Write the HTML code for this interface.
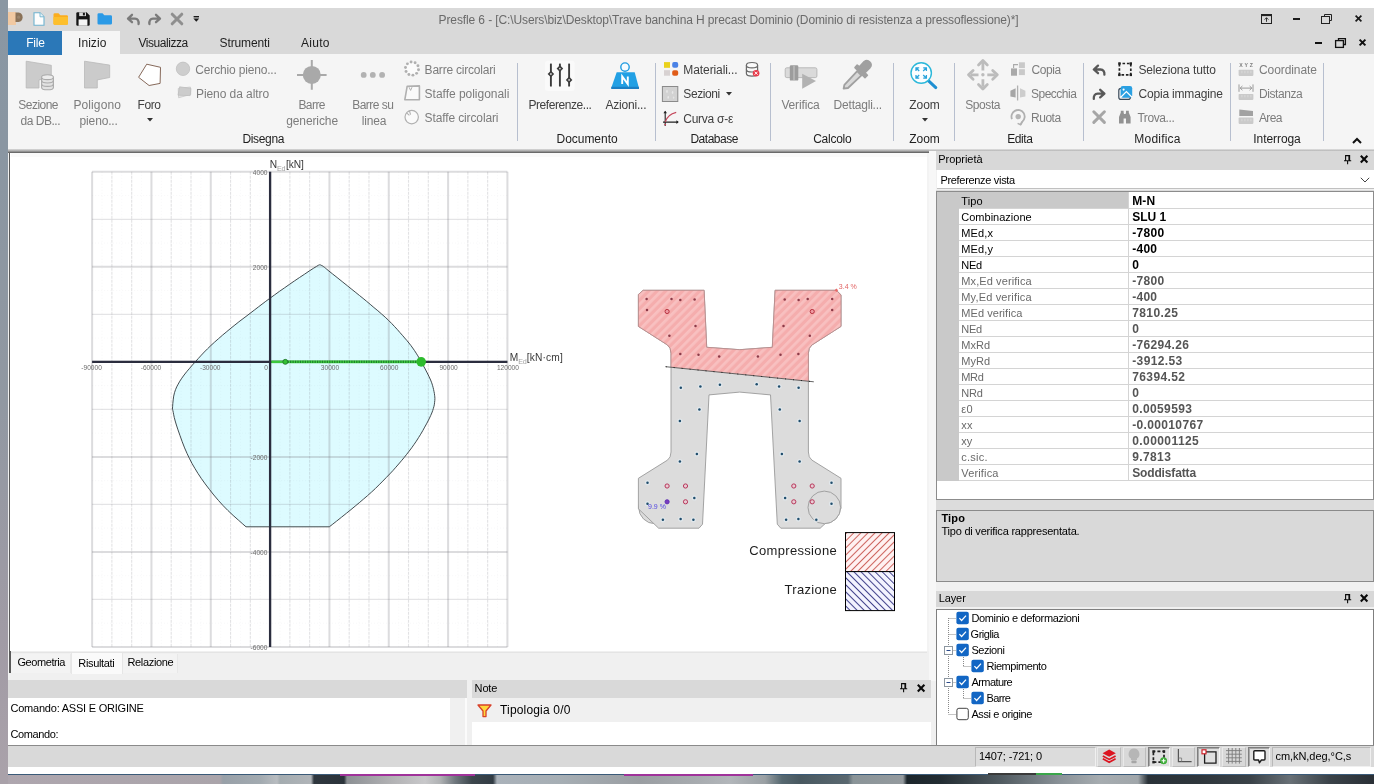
<!DOCTYPE html>
<html><head><meta charset="utf-8"><title>Presfle 6</title>
<style>
html,body{margin:0;padding:0;}
body{width:1374px;height:784px;overflow:hidden;background:#fff;position:relative;font-family:"Liberation Sans",sans-serif;}
div,span,svg{position:absolute;box-sizing:border-box;}
svg{overflow:visible;}
#root{left:0;top:0;width:1374px;height:784px;will-change:transform;}
</style></head><body><div id="root">
<div style="left:0px;top:0px;width:8px;height:784px;background:linear-gradient(#8a97a3 0px, #8a96a2 150px, #9198a2 400px, #a19ba5 640px, #aaa2aa 784px);"></div>
<div style="left:8px;top:8px;width:1366px;height:46px;background:#d9d9d9;"></div>
<div style="left:8px;top:54px;width:1366px;height:95px;background:#f5f5f5;"></div>
<div style="left:8px;top:151px;width:1366px;height:616px;background:#f0f0f0;"></div>
<div style="left:929px;top:151px;width:7px;height:530px;background:#f7f7f7;"></div>
<div style="left:8px;top:149px;width:1366px;height:2px;background:linear-gradient(#e2e2e2,#b4b4b4);"></div>
<div style="left:8px;top:149px;width:921px;height:3.6px;background:linear-gradient(#dcdcdc,#a6a6a6 50%,#565656 100%);"></div>
<div style="left:8px;top:767px;width:1366px;height:8px;background:#fff;"></div>
<div style="left:0px;top:775px;width:1374px;height:9px;background:linear-gradient(90deg,#aea6ae 0px,#aca5ac 120px,#aaa4aa 220px,#98a0a8 223px,#a2aab0 260px,#b8bcc0 277px,#a4acb0 280px,#b0b4b8 311px,#2f373e 314px,#2b333a 344px,#8c9094 347px,#b2b2b4 392px,#c8c8ca 425px,#b0b2b4 440px,#70787e 455px,#3c464c 472px,#323c44 493px,#aab2ba 497px,#a6aeb4 560px,#9a9ea2 640px,#a8acb0 700px,#b2b6ba 730px,#9aa0a4 765px,#566870 782px,#485860 800px,#5a6870 848px,#8a9498 853px,#949a9e 903px,#1c262c 907px,#222c32 940px,#505a60 1000px,#8a9298 1060px,#a6acb0 1100px,#a0a6aa 1138px,#2a3238 1148px,#2e363c 1200px,#3a4248 1250px,#687076 1290px,#3a4248 1330px,#2a3036 1374px);"></div>
<div style="left:0px;top:770px;width:8px;height:14px;background:#a9a1a9;"></div>
<div style="left:8px;top:774.2px;width:1366px;height:1.2px;background:#3a5a78;"></div>
<div style="left:340px;top:774px;width:135px;height:2px;background:#a0329a;"></div>
<div style="left:624px;top:774px;width:129px;height:2px;background:#a0329a;"></div>
<div style="left:988px;top:773.4px;width:48px;height:1.6px;background:#3a3a3a;"></div>
<div style="left:1036px;top:773.2px;width:26px;height:2px;background:#3aa64a;"></div>
<div style="left:8px;top:12px;width:8px;height:13px;background:#f1c9a2;"></div>
<svg style="left:15px;top:12px;" width="9" height="11" viewBox="0 0 9 11"><path d="M0.5 0.5 H3.5 A4.8 4.8 0 0 1 3.5 10 H0.5 Z" fill="#8a7258"/><circle cx="3.6" cy="5.2" r="1.6" fill="#9a846c"/></svg>
<svg style="left:33px;top:12px;" width="12" height="14" viewBox="0 0 12 14"><path d="M1 0.8 H7 L11 4.8 V13.2 H1 Z" fill="#fdfdfd" stroke="#6fb3cf" stroke-width="1.1"/><path d="M7 0.8 V4.8 H11" fill="#e8f4fa" stroke="#6fb3cf" stroke-width="0.9"/></svg>
<svg style="left:53px;top:13px;" width="16" height="12" viewBox="0 0 16 12"><path d="M0.5 1.6 Q0.5 0.3 1.8 0.3 H5.5 L7.3 2.2 H13.6 Q15 2.2 15 3.6 V10.4 Q15 11.7 13.6 11.7 H1.8 Q0.5 11.7 0.5 10.4 Z" fill="#fbad1e"/><path d="M0.5 4 H15 V10.4 Q15 11.7 13.6 11.7 H1.8 Q0.5 11.7 0.5 10.4 Z" fill="#fdbf2c"/></svg>
<svg style="left:76px;top:12px;" width="14" height="14" viewBox="0 0 14 14"><path d="M0.3 1.5 Q0.3 0.3 1.5 0.3 H10.6 L13.7 3.4 V12.5 Q13.7 13.7 12.5 13.7 H1.5 Q0.3 13.7 0.3 12.5 Z" fill="#141414"/><rect x="3.2" y="0.3" width="6.8" height="3.8" fill="#d9d9d9"/><rect x="6.9" y="0.8" width="2" height="2.6" fill="#141414"/><rect x="2.6" y="7.4" width="8.8" height="6.3" fill="#f4f4f4"/></svg>
<svg style="left:97px;top:13px;" width="16" height="12" viewBox="0 0 16 12"><path d="M0.5 1.6 Q0.5 0.3 1.8 0.3 H5.5 L7.3 2.2 H13.6 Q15 2.2 15 3.6 V10.2 Q15 11.5 13.6 11.5 H1.8 Q0.5 11.5 0.5 10.2 Z" fill="#2b9ae6"/></svg>
<svg style="left:127px;top:14px;" width="13" height="11" viewBox="0 0 13 11"><path d="M5 0.8 L1 4.6 L5 8.2 M1.4 4.6 H8 Q12 4.8 11.6 10" fill="none" stroke="#7a7a7a" stroke-width="2.3" stroke-linejoin="round" stroke-linecap="round"/></svg>
<svg style="left:148px;top:14px;" width="13" height="11" viewBox="0 0 13 11"><path d="M8 0.8 L12 4.6 L8 8.2 M11.6 4.6 H5 Q1 4.8 1.4 10" fill="none" stroke="#7a7a7a" stroke-width="2.3" stroke-linejoin="round" stroke-linecap="round"/></svg>
<svg style="left:171px;top:13px;" width="12" height="12" viewBox="0 0 12 12"><path d="M1.2 1.2 L10.8 10.8 M10.8 1.2 L1.2 10.8" stroke="#8f8f8f" stroke-width="3" stroke-linecap="round"/></svg>
<svg style="left:193px;top:16px;" width="7" height="6" viewBox="0 0 7 6"><rect x="0.6" y="0" width="5.4" height="1.4" fill="#1a1a1a"/><path d="M0.4 2.6 H6.2 L3.3 5.8 Z" fill="#1a1a1a"/></svg>
<span style="left:438.6px;top:11.5px;font-size:12px;line-height:16px;letter-spacing:-0.114px;color:#6a6a6a;white-space:pre;">Presfle 6 - [C:\Users\biz\Desktop\Trave banchina H precast Dominio (Dominio di resistenza a pressoflessione)*]</span>
<svg style="left:1261px;top:14px;" width="11" height="10" viewBox="0 0 11 10"><rect x="0.5" y="0.5" width="10" height="9" fill="none" stroke="#222" stroke-width="1"/><rect x="0.5" y="0.5" width="10" height="1.6" fill="#222"/><path d="M5.5 7.8 V3.8 M3.6 5.6 L5.5 3.7 L7.4 5.6" fill="none" stroke="#222" stroke-width="0.9"/></svg>
<div style="left:1293px;top:18px;width:7px;height:2px;background:#1a1a1a;"></div>
<svg style="left:1321px;top:14px;" width="11" height="10" viewBox="0 0 11 10"><path d="M3.5 2.5 V0.5 H10.5 V6.5 H8.5" fill="none" stroke="#222" stroke-width="1"/><rect x="0.5" y="2.5" width="8" height="7" fill="none" stroke="#222" stroke-width="1"/></svg>
<svg style="left:1355px;top:15px;" width="7" height="7" viewBox="0 0 7 7"><path d="M0.6 0.6 L6.4 6.4 M6.4 0.6 L0.6 6.4" stroke="#1a1a1a" stroke-width="1.7"/></svg>
<div style="left:1315px;top:42px;width:7px;height:2px;background:#111;"></div>
<svg style="left:1335px;top:38px;" width="11" height="10" viewBox="0 0 11 10"><path d="M3.5 2.5 V0.6 H10.4 V6.5 H8.5" fill="none" stroke="#111" stroke-width="1.3"/><rect x="0.6" y="2.6" width="7.8" height="6.8" fill="none" stroke="#111" stroke-width="1.3"/></svg>
<svg style="left:1359px;top:39px;" width="7" height="7" viewBox="0 0 7 7"><path d="M0.6 0.6 L6.4 6.4 M6.4 0.6 L0.6 6.4" stroke="#111" stroke-width="2"/></svg>
<div style="left:8px;top:31px;width:54px;height:24px;background:#2b78b8;"></div>
<div style="left:62px;top:31px;width:58px;height:24px;background:#f5f5f5;"></div>
<span style="left:26.3px;top:34.6px;font-size:12px;line-height:16px;letter-spacing:-0.259px;color:#ffffff;white-space:pre;">File</span>
<span style="left:78.0px;top:34.6px;font-size:12px;line-height:16px;letter-spacing:0.064px;color:#1e1e1e;white-space:pre;">Inizio</span>
<span style="left:138.5px;top:34.6px;font-size:12px;line-height:16px;letter-spacing:-0.451px;color:#1e1e1e;white-space:pre;">Visualizza</span>
<span style="left:219.6px;top:34.6px;font-size:12px;line-height:16px;letter-spacing:-0.139px;color:#1e1e1e;white-space:pre;">Strumenti</span>
<span style="left:301.0px;top:34.6px;font-size:12px;line-height:16px;letter-spacing:0.270px;color:#1e1e1e;white-space:pre;">Aiuto</span>
<div style="left:517px;top:63px;width:1px;height:78px;background:#b7bfcf;"></div>
<div style="left:655px;top:63px;width:1px;height:78px;background:#b7bfcf;"></div>
<div style="left:770px;top:63px;width:1px;height:78px;background:#b7bfcf;"></div>
<div style="left:893px;top:63px;width:1px;height:78px;background:#b7bfcf;"></div>
<div style="left:954px;top:63px;width:1px;height:78px;background:#b7bfcf;"></div>
<div style="left:1083px;top:63px;width:1px;height:78px;background:#b7bfcf;"></div>
<div style="left:1230px;top:63px;width:1px;height:78px;background:#b7bfcf;"></div>
<div style="left:1323px;top:63px;width:1px;height:78px;background:#b7bfcf;"></div>
<span style="left:242.4px;top:130.8px;font-size:12px;line-height:16px;letter-spacing:-0.318px;color:#1e1e1e;white-space:pre;">Disegna</span>
<span style="left:556.5px;top:130.8px;font-size:12px;line-height:16px;letter-spacing:-0.029px;color:#1e1e1e;white-space:pre;">Documento</span>
<span style="left:690.4px;top:130.8px;font-size:12px;line-height:16px;letter-spacing:-0.471px;color:#1e1e1e;white-space:pre;">Database</span>
<span style="left:813.2px;top:130.8px;font-size:12px;line-height:16px;letter-spacing:-0.260px;color:#1e1e1e;white-space:pre;">Calcolo</span>
<span style="left:909.2px;top:130.8px;font-size:12px;line-height:16px;letter-spacing:-0.018px;color:#1e1e1e;white-space:pre;">Zoom</span>
<span style="left:1007.3px;top:130.8px;font-size:12px;line-height:16px;letter-spacing:-0.430px;color:#1e1e1e;white-space:pre;">Edita</span>
<span style="left:1134.3px;top:130.8px;font-size:12px;line-height:16px;letter-spacing:0.215px;color:#1e1e1e;white-space:pre;">Modifica</span>
<span style="left:1253.3px;top:130.8px;font-size:12px;line-height:16px;letter-spacing:-0.070px;color:#1e1e1e;white-space:pre;">Interroga</span>
<svg style="left:1352px;top:137px;" width="10" height="7" viewBox="0 0 10 7"><path d="M1 6 L5 2 L9 6" fill="none" stroke="#111" stroke-width="2"/></svg>
<span style="left:18.3px;top:96.7px;font-size:12px;line-height:16px;letter-spacing:-0.524px;color:#7c7c7c;white-space:pre;">Sezione</span>
<span style="left:20.5px;top:112.7px;font-size:12px;line-height:16px;letter-spacing:-0.482px;color:#7c7c7c;white-space:pre;">da DB...</span>
<span style="left:73.4px;top:96.7px;font-size:12px;line-height:16px;letter-spacing:0.112px;color:#7c7c7c;white-space:pre;">Poligono</span>
<span style="left:79.6px;top:112.7px;font-size:12px;line-height:16px;letter-spacing:-0.158px;color:#7c7c7c;white-space:pre;">pieno...</span>
<span style="left:137.5px;top:96.7px;font-size:12px;line-height:16px;letter-spacing:-0.418px;color:#404040;white-space:pre;">Foro</span>
<svg style="left:146.5px;top:118px;" width="6" height="4" viewBox="0 0 6 4"><path d="M0 0 H6 L3 3.4 Z" fill="#333"/></svg>
<span style="left:195.3px;top:61.8px;font-size:12px;line-height:16px;letter-spacing:-0.165px;color:#7c7c7c;white-space:pre;">Cerchio pieno...</span>
<span style="left:196.0px;top:85.8px;font-size:12px;line-height:16px;letter-spacing:-0.075px;color:#7c7c7c;white-space:pre;">Pieno da altro</span>
<span style="left:298.4px;top:96.7px;font-size:12px;line-height:16px;letter-spacing:-0.549px;color:#7c7c7c;white-space:pre;">Barre</span>
<span style="left:286.2px;top:112.7px;font-size:12px;line-height:16px;letter-spacing:-0.101px;color:#7c7c7c;white-space:pre;">generiche</span>
<span style="left:352.2px;top:96.7px;font-size:12px;line-height:16px;letter-spacing:-0.506px;color:#7c7c7c;white-space:pre;">Barre su</span>
<span style="left:361.7px;top:112.7px;font-size:12px;line-height:16px;letter-spacing:-0.131px;color:#7c7c7c;white-space:pre;">linea</span>
<span style="left:424.6px;top:61.8px;font-size:12px;line-height:16px;letter-spacing:-0.214px;color:#7c7c7c;white-space:pre;">Barre circolari</span>
<span style="left:424.6px;top:85.8px;font-size:12px;line-height:16px;letter-spacing:-0.022px;color:#7c7c7c;white-space:pre;">Staffe poligonali</span>
<span style="left:424.6px;top:109.6px;font-size:12px;line-height:16px;letter-spacing:-0.126px;color:#7c7c7c;white-space:pre;">Staffe circolari</span>
<span style="left:528.5px;top:96.7px;font-size:12px;line-height:16px;letter-spacing:-0.446px;color:#404040;white-space:pre;">Preferenze...</span>
<span style="left:605.4px;top:96.7px;font-size:12px;line-height:16px;letter-spacing:-0.187px;color:#404040;white-space:pre;">Azioni...</span>
<span style="left:683.3px;top:61.8px;font-size:12px;line-height:16px;letter-spacing:-0.087px;color:#404040;white-space:pre;">Materiali...</span>
<span style="left:683.3px;top:86.4px;font-size:12px;line-height:16px;letter-spacing:-0.422px;color:#404040;white-space:pre;">Sezioni</span>
<svg style="left:725.5px;top:92px;" width="6" height="4" viewBox="0 0 6 4"><path d="M0 0 H6 L3 3.4 Z" fill="#333"/></svg>
<span style="left:683.3px;top:110.6px;font-size:12px;line-height:16px;letter-spacing:-0.266px;color:#404040;white-space:pre;">Curva σ-ε</span>
<span style="left:781.4px;top:96.7px;font-size:12px;line-height:16px;letter-spacing:-0.144px;color:#7c7c7c;white-space:pre;">Verifica</span>
<span style="left:833.6px;top:96.7px;font-size:12px;line-height:16px;letter-spacing:-0.208px;color:#7c7c7c;white-space:pre;">Dettagli...</span>
<span style="left:909.2px;top:96.7px;font-size:12px;line-height:16px;letter-spacing:-0.018px;color:#404040;white-space:pre;">Zoom</span>
<svg style="left:921.5px;top:118px;" width="6" height="4" viewBox="0 0 6 4"><path d="M0 0 H6 L3 3.4 Z" fill="#333"/></svg>
<span style="left:965.3px;top:97.0px;font-size:12px;line-height:16px;letter-spacing:-0.443px;color:#7c7c7c;white-space:pre;">Sposta</span>
<span style="left:1031.6px;top:61.8px;font-size:12px;line-height:16px;letter-spacing:-0.451px;color:#7c7c7c;white-space:pre;">Copia</span>
<span style="left:1031.0px;top:85.8px;font-size:12px;line-height:16px;letter-spacing:-0.496px;color:#7c7c7c;white-space:pre;">Specchia</span>
<span style="left:1031.0px;top:109.6px;font-size:12px;line-height:16px;letter-spacing:-0.464px;color:#7c7c7c;white-space:pre;">Ruota</span>
<span style="left:1138.4px;top:61.8px;font-size:12px;line-height:16px;letter-spacing:-0.139px;color:#404040;white-space:pre;">Seleziona tutto</span>
<span style="left:1138.4px;top:85.8px;font-size:12px;line-height:16px;letter-spacing:-0.172px;color:#404040;white-space:pre;">Copia immagine</span>
<span style="left:1137.4px;top:109.6px;font-size:12px;line-height:16px;letter-spacing:-0.404px;color:#7c7c7c;white-space:pre;">Trova...</span>
<span style="left:1259.0px;top:61.8px;font-size:12px;line-height:16px;letter-spacing:-0.091px;color:#7c7c7c;white-space:pre;">Coordinate</span>
<span style="left:1259.0px;top:85.8px;font-size:12px;line-height:16px;letter-spacing:-0.423px;color:#7c7c7c;white-space:pre;">Distanza</span>
<span style="left:1259.0px;top:109.6px;font-size:12px;line-height:16px;letter-spacing:-0.637px;color:#7c7c7c;white-space:pre;">Area</span>
<svg style="left:0px;top:0px;" width="1374" height="784" viewBox="0 0 1374 784"><path d="M26.2 61.2 L51.3 65.3 L51.3 77.5 L39 79.9 L39 88 L26.2 88 Z" fill="#cbcbcb" stroke="#b9b9b9" stroke-width="0.8"/><path d="M41.6 77.2 V87.4 A5.9 2.4 0 0 0 53.4 87.4 V77.2 Z" fill="#e2e2e2" stroke="#aaaaaa" stroke-width="1.1"/><ellipse cx="47.5" cy="77.2" rx="5.9" ry="2.4" fill="#ececec" stroke="#aaaaaa" stroke-width="1.1"/><path d="M41.6 80.6 A5.9 2.4 0 0 0 53.4 80.6 M41.6 84 A5.9 2.4 0 0 0 53.4 84" fill="none" stroke="#aaaaaa" stroke-width="1.1"/><path d="M84.5 61.2 L109.7 65.1 L109.7 77.5 L97.3 79.9 L97.3 88 L84.5 88 Z" fill="#cbcbcb" stroke="#b9b9b9" stroke-width="0.8"/><path d="M146.7 64.2 L160.5 67.3 L160.1 83.4 L149.1 85.5 L138.6 77.3 Z" fill="#ffffff" stroke="#86695a" stroke-width="1"/><circle cx="183" cy="68.8" r="6.7" fill="#cecece" stroke="#bfbfbf" stroke-width="0.8"/><path d="M178.2 88.6 L190.4 87 L190.8 94.4 L178.6 97.8 Z" fill="#e2e2e2" stroke="#c6c6c6" stroke-width="0.7"/><path d="M179.6 86.8 L191 88.4 L190.2 95.6 L178 95.2 Z" fill="#cccccc" stroke="#bcbcbc" stroke-width="0.7"/><path d="M297 74.9 H326.6 M311.8 60.1 V89.7" stroke="#a9a9a9" stroke-width="2"/><circle cx="311.8" cy="74.9" r="9" fill="#a9a9a9"/><circle cx="363.7" cy="74.9" r="2.9" fill="#b2b2b2"/><circle cx="372.8" cy="74.9" r="2.9" fill="#b2b2b2"/><circle cx="382.1" cy="74.9" r="2.9" fill="#b2b2b2"/><circle cx="412" cy="68.6" r="6.4" fill="#fbfbfb"/><circle cx="418.50" cy="69.75" r="1.45" fill="#b0b0b0"/><circle cx="416.58" cy="73.35" r="1.45" fill="#b0b0b0"/><circle cx="412.92" cy="75.14" r="1.45" fill="#b0b0b0"/><circle cx="408.90" cy="74.43" r="1.45" fill="#b0b0b0"/><circle cx="406.07" cy="71.49" r="1.45" fill="#b0b0b0"/><circle cx="405.50" cy="67.45" r="1.45" fill="#b0b0b0"/><circle cx="407.42" cy="63.85" r="1.45" fill="#b0b0b0"/><circle cx="411.08" cy="62.06" r="1.45" fill="#b0b0b0"/><circle cx="415.10" cy="62.77" r="1.45" fill="#b0b0b0"/><circle cx="417.93" cy="65.71" r="1.45" fill="#b0b0b0"/><path d="M407.2 86.2 L419.4 85.9 L419.4 99.8 L404.8 99.8 Z" fill="#fafafa" stroke="#b0b0b0" stroke-width="1.6" stroke-linejoin="round"/><path d="M409 87.2 L410.6 90.4 L412 87.2" fill="none" stroke="#b0b0b0" stroke-width="1"/><circle cx="411.7" cy="117.1" r="6.7" fill="#fafafa" stroke="#b0b0b0" stroke-width="1.2"/><path d="M406.6 112.8 L409.4 115.4 M409.4 110.8 L410.6 114.6" fill="none" stroke="#b0b0b0" stroke-width="1.1"/><rect x="545" y="60.7" width="29.7" height="30.3" rx="3" fill="#fafafa"/><line x1="550.9" y1="63.6" x2="550.9" y2="86.5" stroke="#3c3c3c" stroke-width="1.9"/><path d="M547.6 74 L550.9 70.7 L554.1999999999999 74 L550.9 77.3 Z" fill="#3c3c3c"/><circle cx="550.9" cy="74" r="0.9" fill="#d8d8d8"/><line x1="559.9" y1="63.6" x2="559.9" y2="86.5" stroke="#3c3c3c" stroke-width="1.9"/><path d="M556.6 68.6 L559.9 65.3 L563.1999999999999 68.6 L559.9 71.89999999999999 Z" fill="#3c3c3c"/><circle cx="559.9" cy="68.6" r="0.9" fill="#d8d8d8"/><line x1="569.1" y1="63.6" x2="569.1" y2="86.5" stroke="#3c3c3c" stroke-width="1.9"/><path d="M565.8000000000001 79.9 L569.1 76.60000000000001 L572.4 79.9 L569.1 83.2 Z" fill="#3c3c3c"/><circle cx="569.1" cy="79.9" r="0.9" fill="#d8d8d8"/><circle cx="625" cy="67.1" r="4.2" fill="#f4fbff" stroke="#1e9be0" stroke-width="1.4"/><path d="M616.7 72.3 L634.7 72.3 L638.8 87.4 L611.4 87.4 Z" fill="#22a0e4"/><rect x="611.2" y="86.8" width="27.8" height="2.2" fill="#1b7fc4"/><path d="M622.2 84 V76.4 L627.8 84 V76.4" fill="none" stroke="#ffffff" stroke-width="1.9" stroke-linejoin="miter"/><rect x="664" y="62.1" width="6" height="5.7" fill="#ead21c"/><rect x="672.2" y="62.1" width="6" height="5.7" rx="1.8" fill="#4a82e6"/><rect x="664" y="70.2" width="6" height="5.5" fill="#d8d2d2"/><rect x="672.2" y="70.2" width="6" height="5.5" rx="1.8" fill="#e05c18"/><path d="M746.4 65.2 V73.6 A5.6 2.6 0 0 0 757.6 73.6 V65.2" fill="#f8f8f8" stroke="#6a6a6a" stroke-width="1.2"/><ellipse cx="752" cy="65.2" rx="5.6" ry="2.7" fill="#fbfbfb" stroke="#6a6a6a" stroke-width="1.2"/><path d="M746.4 69.4 A5.6 2.6 0 0 0 757.6 69.4" fill="none" stroke="#6a6a6a" stroke-width="1.2"/><circle cx="756.1" cy="73.2" r="3.3" fill="#e83a4a"/><path d="M754.6 71.7 L757.6 74.7 M757.6 71.7 L754.6 74.7" stroke="#fff" stroke-width="1"/><rect x="662.4" y="86.5" width="15.4" height="15" fill="#d2d2d2" stroke="#8a8a8a" stroke-width="1"/><ellipse cx="667" cy="91.5" rx="0.8" ry="1.4" fill="#e8e8e8"/><ellipse cx="672.6" cy="92.5" rx="0.8" ry="1.4" fill="#e8e8e8"/><ellipse cx="668.2" cy="97.4" rx="0.8" ry="1.4" fill="#e8e8e8"/><ellipse cx="673.6" cy="97.6" rx="0.7" ry="1.2" fill="#e4e4e4"/><path d="M665.2 111.4 V125.9 M663 122.1 H678" stroke="#222" stroke-width="1.1" fill="none"/><path d="M663.4 113.2 L665.2 110.8 L667 113.2 Z M676.4 120.3 L678.8 122.1 L676.4 123.9 Z" fill="#222"/><path d="M665.2 122.1 Q667.6 114.4 676.2 112.4" fill="none" stroke="#c4465a" stroke-width="1.2"/><circle cx="665.2" cy="124.6" r="0.9" fill="#c4465a"/><rect x="785.2" y="67.8" width="31.7" height="9.8" rx="1.6" fill="#dadada" stroke="#b4b4b4" stroke-width="0.9"/><rect x="789.8" y="65.2" width="8.5" height="15.4" rx="1.2" fill="#9c9c9c"/><rect x="793.2" y="65.8" width="1.6" height="14.2" fill="#b8b8b8"/><path d="M802.2 73.7 L816 80.9 L802.2 88.8 Z" fill="#b2b2b2"/><path d="M843.6 88.6 L844.4 84.8 L857.2 71.2 L861.4 75.4 L848 88 Z" fill="#d8d8d8" stroke="#a0a0a0" stroke-width="1.8" stroke-linejoin="round"/><path d="M855 67.6 L865 77.6 L867.4 75.2 L865 72.8 L870 67.6 A4.2 4.2 0 0 0 864.2 61.6 L859.4 66.8 L857.2 65 Z" fill="#a0a0a0" stroke="#a0a0a0" stroke-width="1.6" stroke-linejoin="round"/><line x1="928.6" y1="80.9" x2="935.8" y2="87.6" stroke="#1e8fd2" stroke-width="3" stroke-linecap="round"/><circle cx="921.2" cy="73" r="10.2" fill="#fcfeff" stroke="#2cb8da" stroke-width="1.4"/><path d="M919.2 71 L916.0 67.8 M919.2 67.8 L916.0 67.8 L916.0 71.0" fill="none" stroke="#2aa4dc" stroke-width="1.3"/><path d="M923.2 71 L926.4000000000001 67.8 M923.2 67.8 L926.4000000000001 67.8 L926.4000000000001 71.0" fill="none" stroke="#2aa4dc" stroke-width="1.3"/><path d="M919.2 75 L916.0 78.2 M919.2 78.2 L916.0 78.2 L916.0 75.0" fill="none" stroke="#2aa4dc" stroke-width="1.3"/><path d="M923.2 75 L926.4000000000001 78.2 M923.2 78.2 L926.4000000000001 78.2 L926.4000000000001 75.0" fill="none" stroke="#2aa4dc" stroke-width="1.3"/><path d="M982.9 70.39999999999999 V62.8 M982.9 79.2 V86.8 M978.5 74.8 H970.9 M987.3 74.8 H994.9" stroke="#bcbcbc" stroke-width="2.8" fill="none"/><path d="M978.5 65.0 L982.9 60.599999999999994 L987.3 65.0 M978.5 84.6 L982.9 89.0 L987.3 84.6 M973.1 70.39999999999999 L968.5 74.8 L973.1 79.2 M992.6999999999999 70.39999999999999 L997.3 74.8 L992.6999999999999 79.2" stroke="#bcbcbc" stroke-width="2.8" fill="none" stroke-linecap="round" stroke-linejoin="round"/><circle cx="982.9" cy="74.8" r="1.7" fill="#bcbcbc"/><rect x="1011" y="68.4" width="6" height="7.3" fill="#a9a9a9"/><rect x="1018.9" y="62.3" width="6" height="5.8" fill="#c9c9c9"/><rect x="1018.9" y="69.2" width="6" height="5.9" fill="#c9c9c9"/><path d="M1013.6 68 V64.6 H1018" fill="none" stroke="#a9a9a9" stroke-width="1.1"/><line x1="1017.6" y1="85.5" x2="1017.6" y2="100.5" stroke="#b0b0b0" stroke-width="1.3"/><path d="M1010.4 90.7 L1015.6 88.2 V97.4 L1010.4 96.6 Z" fill="#a6a6a6"/><path d="M1025.4 90.7 L1020 88.2 V97.4 L1025.4 96.6 Z" fill="#cdcdcd"/><circle cx="1018.2" cy="116.6" r="2.7" fill="#b4b4b4"/><path d="M1012 119.2 A6.6 6.6 0 1 1 1022.4 121.6 L1020.6 124.6" fill="none" stroke="#b0b0b0" stroke-width="1.8"/><path d="M1017.6 123.4 L1020.6 124.8 L1022 121.6" fill="none" stroke="#b0b0b0" stroke-width="1.5"/><path d="M1098 65.6 L1093.8 69.5 L1098 73.2 M1094.2 69.5 H1100.4 Q1104.8 69.8 1104.4 74.6" fill="none" stroke="#585858" stroke-width="2.3" stroke-linejoin="round" stroke-linecap="round"/><path d="M1100.2 89.8 L1104.4 93.7 L1100.2 97.4 M1104 93.7 H1097.8 Q1093.4 94 1093.8 98.8" fill="none" stroke="#585858" stroke-width="2.3" stroke-linejoin="round" stroke-linecap="round"/><path d="M1093.8 111.8 L1104.4 122.4 M1104.4 111.8 L1093.8 122.4" stroke="#a6a6a6" stroke-width="3" stroke-linecap="round"/><rect x="1119.4" y="63.5" width="11.4" height="11.4" fill="none" stroke="#222" stroke-width="1.7" stroke-dasharray="2.6 1.8" stroke-dashoffset="1.3"/><rect x="1118.2" y="62.3" width="2.4" height="2.4" fill="#222"/><rect x="1118.2" y="73.7" width="2.4" height="2.4" fill="#222"/><rect x="1129.6" y="62.3" width="2.4" height="2.4" fill="#222"/><rect x="1129.6" y="73.7" width="2.4" height="2.4" fill="#222"/><rect x="1118.8" y="88.4" width="11.6" height="11" rx="2.2" fill="#f5f5f5" stroke="#3a4a5a" stroke-width="1.2"/><rect x="1120.6" y="86.1" width="11.6" height="11.6" rx="2.2" fill="#2aa0e2"/><path d="M1121 97 L1126.4 91.6 L1131.8 97 " fill="none" stroke="#fff" stroke-width="1.2"/><circle cx="1123.6" cy="89.6" r="1.1" fill="#fff"/><path d="M1119 123.6 V117 L1120.8 112.4 V110.8 H1123.6 V112.4 L1124 114 H1125.6 L1126 112.4 V110.8 H1128.8 V112.4 L1130.6 117 V123.6 H1126 V118.6 H1123.6 V123.6 Z" fill="#929292"/><rect x="1238.6" y="69.8" width="14.8" height="6.1" rx="0.8" fill="#cacaca"/><rect x="1238.6" y="94" width="14.8" height="5.9" rx="0.8" fill="#cacaca"/><rect x="1238.6" y="117.6" width="14.8" height="6.3" rx="0.8" fill="#cacaca"/><rect x="1241.5" y="70.8" width="0.8" height="2.4" fill="#dcdcdc"/><rect x="1244.5" y="70.8" width="0.8" height="2.4" fill="#dcdcdc"/><rect x="1247.5" y="70.8" width="0.8" height="2.4" fill="#dcdcdc"/><rect x="1250.5" y="70.8" width="0.8" height="2.4" fill="#dcdcdc"/><rect x="1241.5" y="95" width="0.8" height="2.4" fill="#dcdcdc"/><rect x="1244.5" y="95" width="0.8" height="2.4" fill="#dcdcdc"/><rect x="1247.5" y="95" width="0.8" height="2.4" fill="#dcdcdc"/><rect x="1250.5" y="95" width="0.8" height="2.4" fill="#dcdcdc"/><rect x="1241.5" y="118.8" width="0.8" height="2.4" fill="#dcdcdc"/><rect x="1244.5" y="118.8" width="0.8" height="2.4" fill="#dcdcdc"/><rect x="1247.5" y="118.8" width="0.8" height="2.4" fill="#dcdcdc"/><rect x="1250.5" y="118.8" width="0.8" height="2.4" fill="#dcdcdc"/><path d="M1239.3 109.5 L1253 111.1 V116 H1239.3 Z" fill="#a2a2a2"/><path d="M1239 84.4 V91.8 M1253 84.4 V91.8 M1240 88.1 H1252 M1242.4 86 L1240.2 88.1 L1242.4 90.2 M1249.6 86 L1251.8 88.1 L1249.6 90.2" fill="none" stroke="#9a9a9a" stroke-width="1"/></svg>
<span style="left:1239.2px;top:61.9px;font-size:5.2px;line-height:7px;letter-spacing:0.25px;color:#7c7c7c;white-space:pre;font-weight:bold;">X Y Z</span>
<div style="left:9px;top:152.5px;width:917.5px;height:498.5px;background:#ffffff;border-left:1.5px solid #5a5a5a;"></div>
<div style="left:10.5px;top:153px;width:916px;height:3.6px;background:#fafafa;"></div>
<div style="left:926.5px;top:152.5px;width:2.5px;height:498.5px;background:#f3f3f3;"></div>
<svg style="left:0px;top:0px;" width="1374" height="784" viewBox="0 0 1374 784"><path d="M172.4 409.0 L172.6 406.8 L172.8 403.6 L173.2 399.9 L173.7 396.1 L174.5 392.7 L175.5 389.7 L176.7 386.9 L178.2 384.1 L179.8 381.2 L181.8 378.2 L184.1 375.0 L186.7 371.7 L189.6 368.3 L192.5 364.9 L195.5 361.6 L198.4 358.4 L201.3 355.2 L204.3 352.0 L207.5 348.8 L210.9 345.5 L214.6 342.1 L218.6 338.6 L222.7 335.0 L226.8 331.6 L230.9 328.2 L234.9 325.0 L238.9 321.8 L243.0 318.7 L247.0 315.7 L250.9 312.7 L254.7 309.8 L258.3 307.0 L262.0 304.2 L265.8 301.3 L270.0 298.2 L274.6 294.9 L279.5 291.3 L284.6 287.8 L289.7 284.2 L294.5 280.9 L299.4 277.6 L304.4 274.3 L309.1 271.1 L313.3 268.4 L316.5 266.4 L318.5 265.2 L319.5 264.8 L319.9 264.7 L320.0 264.8 L320.2 264.8 L320.2 264.8 L320.6 265.0 L321.2 265.3 L321.9 265.6 L322.7 266.0 L323.5 266.6 L324.2 267.1 L324.7 267.5 L325.4 268.1 L326.7 269.2 L328.9 271.0 L332.4 273.8 L337.1 277.5 L342.2 281.6 L347.3 285.7 L351.9 289.4 L355.9 292.6 L359.6 295.6 L363.1 298.4 L366.6 301.3 L370.2 304.3 L373.9 307.5 L377.8 310.7 L381.6 314.0 L385.2 317.2 L388.6 320.4 L391.7 323.5 L394.6 326.6 L397.4 329.6 L399.9 332.5 L402.4 335.3 L404.7 338.0 L406.9 340.5 L408.9 343.0 L410.8 345.4 L412.7 348.0 L414.5 350.6 L416.2 353.2 L417.8 355.8 L419.5 358.6 L421.2 361.7 L423.1 365.2 L425.2 369.0 L427.2 372.9 L429.1 376.7 L430.6 380.0 L431.7 382.8 L432.5 385.3 L433.1 387.5 L433.6 389.6 L434.0 391.6 L434.4 393.5 L434.6 395.3 L434.8 396.9 L434.9 398.6 L434.8 400.4 L434.6 402.3 L434.4 404.2 L434.0 406.2 L433.4 408.3 L432.7 410.6 L431.8 413.0 L430.7 415.5 L429.5 418.1 L428.1 420.9 L426.5 423.9 L424.7 427.1 L422.8 430.6 L420.7 434.2 L418.5 437.7 L416.3 441.2 L414.0 444.5 L411.7 447.8 L409.2 451.1 L406.7 454.3 L404.1 457.6 L401.4 460.8 L398.7 464.0 L395.9 467.2 L393.0 470.5 L389.8 473.9 L386.4 477.4 L382.8 481.1 L379.1 484.8 L375.3 488.6 L371.4 492.2 L367.5 495.7 L363.4 499.2 L359.3 502.7 L355.2 506.1 L351.0 509.6 L346.4 513.3 L341.4 517.3 L336.5 521.2 L332.3 524.5 L329.3 526.8 L246.0 526.8 L242.8 524.0 L238.3 520.0 L233.1 515.4 L227.8 510.4 L222.9 505.4 L218.4 500.4 L213.8 495.0 L209.4 489.4 L205.2 483.9 L201.4 478.6 L198.0 473.5 L195.0 468.6 L192.2 463.8 L189.6 458.8 L187.1 453.6 L184.6 447.9 L182.2 441.7 L180.0 435.6 L178.0 429.9 L176.4 425.0 L175.2 421.0 L174.3 417.6 L173.7 414.8 L173.3 412.5 L172.9 410.7 L172.6 409.5 L172.5 409.0 L172.4 409.0 L172.4 409.0 L172.4 409.0 Z" fill="#ddfbff" stroke="none"/><line x1="102.00" y1="171.8" x2="102.00" y2="647.0" stroke="rgba(120,120,128,0.05)" stroke-width="1" stroke-dasharray="1 2"/><line x1="121.78" y1="171.8" x2="121.78" y2="647.0" stroke="rgba(120,120,128,0.05)" stroke-width="1" stroke-dasharray="1 2"/><line x1="141.55" y1="171.8" x2="141.55" y2="647.0" stroke="rgba(120,120,128,0.05)" stroke-width="1" stroke-dasharray="1 2"/><line x1="161.33" y1="171.8" x2="161.33" y2="647.0" stroke="rgba(120,120,128,0.05)" stroke-width="1" stroke-dasharray="1 2"/><line x1="181.11" y1="171.8" x2="181.11" y2="647.0" stroke="rgba(120,120,128,0.05)" stroke-width="1" stroke-dasharray="1 2"/><line x1="200.88" y1="171.8" x2="200.88" y2="647.0" stroke="rgba(120,120,128,0.05)" stroke-width="1" stroke-dasharray="1 2"/><line x1="220.66" y1="171.8" x2="220.66" y2="647.0" stroke="rgba(120,120,128,0.05)" stroke-width="1" stroke-dasharray="1 2"/><line x1="240.44" y1="171.8" x2="240.44" y2="647.0" stroke="rgba(120,120,128,0.05)" stroke-width="1" stroke-dasharray="1 2"/><line x1="260.21" y1="171.8" x2="260.21" y2="647.0" stroke="rgba(120,120,128,0.05)" stroke-width="1" stroke-dasharray="1 2"/><line x1="279.99" y1="171.8" x2="279.99" y2="647.0" stroke="rgba(120,120,128,0.05)" stroke-width="1" stroke-dasharray="1 2"/><line x1="299.76" y1="171.8" x2="299.76" y2="647.0" stroke="rgba(120,120,128,0.05)" stroke-width="1" stroke-dasharray="1 2"/><line x1="319.54" y1="171.8" x2="319.54" y2="647.0" stroke="rgba(120,120,128,0.05)" stroke-width="1" stroke-dasharray="1 2"/><line x1="339.32" y1="171.8" x2="339.32" y2="647.0" stroke="rgba(120,120,128,0.05)" stroke-width="1" stroke-dasharray="1 2"/><line x1="359.09" y1="171.8" x2="359.09" y2="647.0" stroke="rgba(120,120,128,0.05)" stroke-width="1" stroke-dasharray="1 2"/><line x1="378.87" y1="171.8" x2="378.87" y2="647.0" stroke="rgba(120,120,128,0.05)" stroke-width="1" stroke-dasharray="1 2"/><line x1="398.65" y1="171.8" x2="398.65" y2="647.0" stroke="rgba(120,120,128,0.05)" stroke-width="1" stroke-dasharray="1 2"/><line x1="418.42" y1="171.8" x2="418.42" y2="647.0" stroke="rgba(120,120,128,0.05)" stroke-width="1" stroke-dasharray="1 2"/><line x1="438.20" y1="171.8" x2="438.20" y2="647.0" stroke="rgba(120,120,128,0.05)" stroke-width="1" stroke-dasharray="1 2"/><line x1="457.97" y1="171.8" x2="457.97" y2="647.0" stroke="rgba(120,120,128,0.05)" stroke-width="1" stroke-dasharray="1 2"/><line x1="477.75" y1="171.8" x2="477.75" y2="647.0" stroke="rgba(120,120,128,0.05)" stroke-width="1" stroke-dasharray="1 2"/><line x1="497.53" y1="171.8" x2="497.53" y2="647.0" stroke="rgba(120,120,128,0.05)" stroke-width="1" stroke-dasharray="1 2"/><line x1="92.1" y1="623.21" x2="507.4" y2="623.21" stroke="rgba(120,120,128,0.05)" stroke-width="1" stroke-dasharray="1 2"/><line x1="92.1" y1="575.69" x2="507.4" y2="575.69" stroke="rgba(120,120,128,0.05)" stroke-width="1" stroke-dasharray="1 2"/><line x1="92.1" y1="528.17" x2="507.4" y2="528.17" stroke="rgba(120,120,128,0.05)" stroke-width="1" stroke-dasharray="1 2"/><line x1="92.1" y1="480.65" x2="507.4" y2="480.65" stroke="rgba(120,120,128,0.05)" stroke-width="1" stroke-dasharray="1 2"/><line x1="92.1" y1="433.13" x2="507.4" y2="433.13" stroke="rgba(120,120,128,0.05)" stroke-width="1" stroke-dasharray="1 2"/><line x1="92.1" y1="385.61" x2="507.4" y2="385.61" stroke="rgba(120,120,128,0.05)" stroke-width="1" stroke-dasharray="1 2"/><line x1="92.1" y1="338.09" x2="507.4" y2="338.09" stroke="rgba(120,120,128,0.05)" stroke-width="1" stroke-dasharray="1 2"/><line x1="92.1" y1="290.57" x2="507.4" y2="290.57" stroke="rgba(120,120,128,0.05)" stroke-width="1" stroke-dasharray="1 2"/><line x1="92.1" y1="243.05" x2="507.4" y2="243.05" stroke="rgba(120,120,128,0.05)" stroke-width="1" stroke-dasharray="1 2"/><line x1="92.1" y1="195.53" x2="507.4" y2="195.53" stroke="rgba(120,120,128,0.05)" stroke-width="1" stroke-dasharray="1 2"/><line x1="111.89" y1="171.8" x2="111.89" y2="647.0" stroke="rgba(120,120,128,0.21)" stroke-width="1.1" stroke-dasharray="3 1"/><line x1="131.67" y1="171.8" x2="131.67" y2="647.0" stroke="rgba(120,120,128,0.21)" stroke-width="1.1" stroke-dasharray="3 1"/><line x1="171.22" y1="171.8" x2="171.22" y2="647.0" stroke="rgba(120,120,128,0.21)" stroke-width="1.1" stroke-dasharray="3 1"/><line x1="191.00" y1="171.8" x2="191.00" y2="647.0" stroke="rgba(120,120,128,0.21)" stroke-width="1.1" stroke-dasharray="3 1"/><line x1="230.55" y1="171.8" x2="230.55" y2="647.0" stroke="rgba(120,120,128,0.21)" stroke-width="1.1" stroke-dasharray="3 1"/><line x1="250.32" y1="171.8" x2="250.32" y2="647.0" stroke="rgba(120,120,128,0.21)" stroke-width="1.1" stroke-dasharray="3 1"/><line x1="289.88" y1="171.8" x2="289.88" y2="647.0" stroke="rgba(120,120,128,0.21)" stroke-width="1.1" stroke-dasharray="3 1"/><line x1="309.65" y1="171.8" x2="309.65" y2="647.0" stroke="rgba(120,120,128,0.21)" stroke-width="1.1" stroke-dasharray="3 1"/><line x1="349.20" y1="171.8" x2="349.20" y2="647.0" stroke="rgba(120,120,128,0.21)" stroke-width="1.1" stroke-dasharray="3 1"/><line x1="368.98" y1="171.8" x2="368.98" y2="647.0" stroke="rgba(120,120,128,0.21)" stroke-width="1.1" stroke-dasharray="3 1"/><line x1="408.53" y1="171.8" x2="408.53" y2="647.0" stroke="rgba(120,120,128,0.21)" stroke-width="1.1" stroke-dasharray="3 1"/><line x1="428.31" y1="171.8" x2="428.31" y2="647.0" stroke="rgba(120,120,128,0.21)" stroke-width="1.1" stroke-dasharray="3 1"/><line x1="467.86" y1="171.8" x2="467.86" y2="647.0" stroke="rgba(120,120,128,0.21)" stroke-width="1.1" stroke-dasharray="3 1"/><line x1="487.64" y1="171.8" x2="487.64" y2="647.0" stroke="rgba(120,120,128,0.21)" stroke-width="1.1" stroke-dasharray="3 1"/><line x1="92.1" y1="599.45" x2="507.4" y2="599.45" stroke="rgba(120,120,128,0.20)" stroke-width="1.2"/><line x1="92.1" y1="504.41" x2="507.4" y2="504.41" stroke="rgba(120,120,128,0.20)" stroke-width="1.2"/><line x1="92.1" y1="409.37" x2="507.4" y2="409.37" stroke="rgba(120,120,128,0.20)" stroke-width="1.2"/><line x1="92.1" y1="314.33" x2="507.4" y2="314.33" stroke="rgba(120,120,128,0.20)" stroke-width="1.2"/><line x1="92.1" y1="219.29" x2="507.4" y2="219.29" stroke="rgba(120,120,128,0.20)" stroke-width="1.2"/><line x1="92.11" y1="171.8" x2="92.11" y2="647.0" stroke="rgba(120,120,128,0.26)" stroke-width="2"/><line x1="151.44" y1="171.8" x2="151.44" y2="647.0" stroke="rgba(120,120,128,0.26)" stroke-width="2"/><line x1="210.77" y1="171.8" x2="210.77" y2="647.0" stroke="rgba(120,120,128,0.26)" stroke-width="2"/><line x1="270.10" y1="171.8" x2="270.10" y2="647.0" stroke="rgba(120,120,128,0.26)" stroke-width="2"/><line x1="329.43" y1="171.8" x2="329.43" y2="647.0" stroke="rgba(120,120,128,0.26)" stroke-width="2"/><line x1="388.76" y1="171.8" x2="388.76" y2="647.0" stroke="rgba(120,120,128,0.26)" stroke-width="2"/><line x1="448.09" y1="171.8" x2="448.09" y2="647.0" stroke="rgba(120,120,128,0.26)" stroke-width="2"/><line x1="507.41" y1="171.8" x2="507.41" y2="647.0" stroke="rgba(120,120,128,0.26)" stroke-width="2"/><line x1="92.1" y1="646.97" x2="507.4" y2="646.97" stroke="rgba(120,120,128,0.26)" stroke-width="2"/><line x1="92.1" y1="551.93" x2="507.4" y2="551.93" stroke="rgba(120,120,128,0.26)" stroke-width="2"/><line x1="92.1" y1="456.89" x2="507.4" y2="456.89" stroke="rgba(120,120,128,0.26)" stroke-width="2"/><line x1="92.1" y1="361.85" x2="507.4" y2="361.85" stroke="rgba(120,120,128,0.26)" stroke-width="2"/><line x1="92.1" y1="266.81" x2="507.4" y2="266.81" stroke="rgba(120,120,128,0.26)" stroke-width="2"/><line x1="92.1" y1="171.77" x2="507.4" y2="171.77" stroke="rgba(120,120,128,0.26)" stroke-width="2"/><path d="M172.4 409.0 L172.6 406.8 L172.8 403.6 L173.2 399.9 L173.7 396.1 L174.5 392.7 L175.5 389.7 L176.7 386.9 L178.2 384.1 L179.8 381.2 L181.8 378.2 L184.1 375.0 L186.7 371.7 L189.6 368.3 L192.5 364.9 L195.5 361.6 L198.4 358.4 L201.3 355.2 L204.3 352.0 L207.5 348.8 L210.9 345.5 L214.6 342.1 L218.6 338.6 L222.7 335.0 L226.8 331.6 L230.9 328.2 L234.9 325.0 L238.9 321.8 L243.0 318.7 L247.0 315.7 L250.9 312.7 L254.7 309.8 L258.3 307.0 L262.0 304.2 L265.8 301.3 L270.0 298.2 L274.6 294.9 L279.5 291.3 L284.6 287.8 L289.7 284.2 L294.5 280.9 L299.4 277.6 L304.4 274.3 L309.1 271.1 L313.3 268.4 L316.5 266.4 L318.5 265.2 L319.5 264.8 L319.9 264.7 L320.0 264.8 L320.2 264.8 L320.2 264.8 L320.6 265.0 L321.2 265.3 L321.9 265.6 L322.7 266.0 L323.5 266.6 L324.2 267.1 L324.7 267.5 L325.4 268.1 L326.7 269.2 L328.9 271.0 L332.4 273.8 L337.1 277.5 L342.2 281.6 L347.3 285.7 L351.9 289.4 L355.9 292.6 L359.6 295.6 L363.1 298.4 L366.6 301.3 L370.2 304.3 L373.9 307.5 L377.8 310.7 L381.6 314.0 L385.2 317.2 L388.6 320.4 L391.7 323.5 L394.6 326.6 L397.4 329.6 L399.9 332.5 L402.4 335.3 L404.7 338.0 L406.9 340.5 L408.9 343.0 L410.8 345.4 L412.7 348.0 L414.5 350.6 L416.2 353.2 L417.8 355.8 L419.5 358.6 L421.2 361.7 L423.1 365.2 L425.2 369.0 L427.2 372.9 L429.1 376.7 L430.6 380.0 L431.7 382.8 L432.5 385.3 L433.1 387.5 L433.6 389.6 L434.0 391.6 L434.4 393.5 L434.6 395.3 L434.8 396.9 L434.9 398.6 L434.8 400.4 L434.6 402.3 L434.4 404.2 L434.0 406.2 L433.4 408.3 L432.7 410.6 L431.8 413.0 L430.7 415.5 L429.5 418.1 L428.1 420.9 L426.5 423.9 L424.7 427.1 L422.8 430.6 L420.7 434.2 L418.5 437.7 L416.3 441.2 L414.0 444.5 L411.7 447.8 L409.2 451.1 L406.7 454.3 L404.1 457.6 L401.4 460.8 L398.7 464.0 L395.9 467.2 L393.0 470.5 L389.8 473.9 L386.4 477.4 L382.8 481.1 L379.1 484.8 L375.3 488.6 L371.4 492.2 L367.5 495.7 L363.4 499.2 L359.3 502.7 L355.2 506.1 L351.0 509.6 L346.4 513.3 L341.4 517.3 L336.5 521.2 L332.3 524.5 L329.3 526.8 L246.0 526.8 L242.8 524.0 L238.3 520.0 L233.1 515.4 L227.8 510.4 L222.9 505.4 L218.4 500.4 L213.8 495.0 L209.4 489.4 L205.2 483.9 L201.4 478.6 L198.0 473.5 L195.0 468.6 L192.2 463.8 L189.6 458.8 L187.1 453.6 L184.6 447.9 L182.2 441.7 L180.0 435.6 L178.0 429.9 L176.4 425.0 L175.2 421.0 L174.3 417.6 L173.7 414.8 L173.3 412.5 L172.9 410.7 L172.6 409.5 L172.5 409.0 L172.4 409.0 L172.4 409.0 L172.4 409.0 Z" fill="none" stroke="#30383c" stroke-width="0.9"/><line x1="92.1" y1="361.85" x2="507.4" y2="361.85" stroke="#2b2d3e" stroke-width="2.3"/><line x1="270.1" y1="171.8" x2="270.1" y2="647.0" stroke="#2b2d3e" stroke-width="2.3"/><line x1="271.3" y1="361.85" x2="285.3" y2="361.85" stroke="#3cc83c" stroke-width="2.6"/><line x1="285.3" y1="361.85" x2="421.2" y2="361.85" stroke="#3fcf3f" stroke-width="2.6"/><line x1="287.6" y1="361.85" x2="421.2" y2="361.85" stroke="#1f7f2c" stroke-width="2.2" stroke-dasharray="1.2 1.25"/><circle cx="285.3" cy="361.85" r="2.5" fill="#33c033" stroke="#1f6f2a" stroke-width="0.8"/><circle cx="421.2" cy="361.85" r="4.8" fill="#2dbb2d"/></svg>
<span style="left:81.3px;top:362.9px;font-size:6.6px;line-height:9px;letter-spacing:0px;color:#6c6c6c;white-space:pre;">-90000</span>
<span style="left:140.7px;top:362.9px;font-size:6.6px;line-height:9px;letter-spacing:0px;color:#6c6c6c;white-space:pre;">-60000</span>
<span style="left:200.0px;top:362.9px;font-size:6.6px;line-height:9px;letter-spacing:0px;color:#6c6c6c;white-space:pre;">-30000</span>
<span style="left:320.8px;top:362.9px;font-size:6.6px;line-height:9px;letter-spacing:0px;color:#6c6c6c;white-space:pre;">30000</span>
<span style="left:380.1px;top:362.9px;font-size:6.6px;line-height:9px;letter-spacing:0px;color:#6c6c6c;white-space:pre;">60000</span>
<span style="left:439.4px;top:362.9px;font-size:6.6px;line-height:9px;letter-spacing:0px;color:#6c6c6c;white-space:pre;">90000</span>
<span style="left:496.9px;top:362.9px;font-size:6.6px;line-height:9px;letter-spacing:0px;color:#6c6c6c;white-space:pre;">120000</span>
<span style="left:264.3px;top:362.9px;font-size:6.6px;line-height:9px;letter-spacing:0px;color:#6c6c6c;white-space:pre;">0</span>
<span style="left:252.8px;top:167.5px;font-size:6.6px;line-height:9px;letter-spacing:0px;color:#6c6c6c;white-space:pre;">4000</span>
<span style="left:252.8px;top:262.5px;font-size:6.6px;line-height:9px;letter-spacing:0px;color:#6c6c6c;white-space:pre;">2000</span>
<span style="left:250.6px;top:452.6px;font-size:6.6px;line-height:9px;letter-spacing:0px;color:#6c6c6c;white-space:pre;">-2000</span>
<span style="left:250.6px;top:547.6px;font-size:6.6px;line-height:9px;letter-spacing:0px;color:#6c6c6c;white-space:pre;">-4000</span>
<span style="left:250.6px;top:642.7px;font-size:6.6px;line-height:9px;letter-spacing:0px;color:#6c6c6c;white-space:pre;">-6000</span>
<span style="left:269.7px;top:157.5px;font-size:10.2px;line-height:13px;letter-spacing:-0.065px;color:#3a3a3a;white-space:pre;">N</span>
<span style="left:276.9px;top:163.8px;font-size:7.2px;line-height:9px;letter-spacing:-0.3px;color:#a4a4a4;white-space:pre;">Ed</span>
<span style="left:285.9px;top:157.5px;font-size:10.2px;line-height:13px;letter-spacing:-0.058px;color:#3a3a3a;white-space:pre;">[kN]</span>
<span style="left:509.7px;top:350.8px;font-size:10.2px;line-height:13px;letter-spacing:-0.596px;color:#3a3a3a;white-space:pre;">M</span>
<span style="left:518.2px;top:357.1px;font-size:7.2px;line-height:9px;letter-spacing:-0.3px;color:#a4a4a4;white-space:pre;">Ed</span>
<span style="left:526.7px;top:350.8px;font-size:10.2px;line-height:13px;letter-spacing:0.168px;color:#3a3a3a;white-space:pre;">[kN·cm]</span>
<svg style="left:0px;top:0px;" width="1374" height="784" viewBox="0 0 1374 784"><defs><pattern id="hc" width="6" height="6" patternUnits="userSpaceOnUse" patternTransform="rotate(-45)"><rect width="6" height="6" fill="#f5adad"/><rect y="0" width="6" height="2.8" fill="#f8c0c0"/></pattern><pattern id="lr" width="5" height="5" patternUnits="userSpaceOnUse" patternTransform="rotate(-45)"><rect width="5" height="5" fill="#fff1f1"/><rect width="5" height="0.95" fill="#cc5e58"/></pattern><pattern id="lb" width="5" height="5" patternUnits="userSpaceOnUse" patternTransform="rotate(45)"><rect width="5" height="5" fill="#f3f3ff"/><rect width="5" height="0.95" fill="#3a3a88"/></pattern><clipPath id="cz"><path d="M600 250 L665.7 366.7 L813.8 381.8 L880 250 Z M600 250 H880 V388 H600 Z" clip-rule="evenodd"/></clipPath></defs><circle cx="655" cy="507.4" r="16.3" fill="#dcdcdc" stroke="#9a9a9a" stroke-width="0.9"/><circle cx="824.3" cy="507.4" r="16.3" fill="#dcdcdc" stroke="#9a9a9a" stroke-width="0.9"/><path d="M638.4 294.5 L643.1 290.3 L704.1 290.3 L706.7 347.3 L739.7 349.7 L772.3 347.3 L775.1 290.3 L836.4 290.3 L841 294.9 L841 326.4 L811.9 345 Q808.4 347.6 808.4 353.2 L808.4 452 Q808.4 457.6 811.9 460.1 L841 478.3 L841 508.8 L820.2 528.2 L780.8 528.2 L777.3 524.2 L770.5 394.9 L739.7 392.1 L709 394.9 L702.5 524.2 L699 528.2 L658.6 528.2 L638.4 508.8 L638.4 478.3 L667.5 460.1 Q671 457.6 671 452 L671 353.2 Q671 347.6 667.5 345 L638.4 326.4 Z" fill="#dcdcdc" stroke="#9a9a9a" stroke-width="0.9"/><clipPath id="cz2"><path d="M600 270 L600 360 L665.7 366.7 L813.8 381.8 L880 388.5 L880 270 Z"/></clipPath><g clip-path="url(#cz2)"><path d="M638.4 294.5 L643.1 290.3 L704.1 290.3 L706.7 347.3 L739.7 349.7 L772.3 347.3 L775.1 290.3 L836.4 290.3 L841 294.9 L841 326.4 L811.9 345 Q808.4 347.6 808.4 353.2 L808.4 452 Q808.4 457.6 811.9 460.1 L841 478.3 L841 508.8 L820.2 528.2 L780.8 528.2 L777.3 524.2 L770.5 394.9 L739.7 392.1 L709 394.9 L702.5 524.2 L699 528.2 L658.6 528.2 L638.4 508.8 L638.4 478.3 L667.5 460.1 Q671 457.6 671 452 L671 353.2 Q671 347.6 667.5 345 L638.4 326.4 Z" fill="url(#hc)" stroke="#b98c8c" stroke-width="0.9"/></g><circle cx="824.3" cy="507.4" r="16.3" fill="#dcdcdc" stroke="#9a9a9a" stroke-width="0.9"/><line x1="665.7" y1="366.7" x2="813.8" y2="381.8" stroke="#555" stroke-width="0.9"/><line x1="665.7" y1="366.7" x2="813.8" y2="381.8" stroke="#222" stroke-width="1" stroke-dasharray="1 7"/><circle cx="646.6" cy="299.1" r="1.25" fill="#8c3a48"/><circle cx="671.5" cy="299.1" r="1.25" fill="#8c3a48"/><circle cx="680.3" cy="300.1" r="1.25" fill="#8c3a48"/><circle cx="694.6" cy="299.6" r="1.25" fill="#8c3a48"/><circle cx="647.0" cy="310.1" r="1.25" fill="#8c3a48"/><circle cx="695.5" cy="325.9" r="1.25" fill="#8c3a48"/><circle cx="669.4" cy="335.7" r="1.25" fill="#8c3a48"/><circle cx="680.3" cy="354.1" r="1.25" fill="#8c3a48"/><circle cx="698.5" cy="354.8" r="1.25" fill="#8c3a48"/><circle cx="719.2" cy="356.4" r="1.25" fill="#8c3a48"/><circle cx="757.9" cy="356.4" r="1.25" fill="#8c3a48"/><circle cx="780.5" cy="354.8" r="1.25" fill="#8c3a48"/><circle cx="798.4" cy="354.1" r="1.25" fill="#8c3a48"/><circle cx="784.7" cy="299.6" r="1.25" fill="#8c3a48"/><circle cx="798.6" cy="300.1" r="1.25" fill="#8c3a48"/><circle cx="807.7" cy="298.9" r="1.25" fill="#8c3a48"/><circle cx="832.2" cy="298.9" r="1.25" fill="#8c3a48"/><circle cx="832.2" cy="310.1" r="1.25" fill="#8c3a48"/><circle cx="783.5" cy="325.9" r="1.25" fill="#8c3a48"/><circle cx="809.8" cy="335.7" r="1.25" fill="#8c3a48"/><circle cx="667.1" cy="311.5" r="2.1" fill="#ee9aa2" stroke="#b8303e" stroke-width="1"/><circle cx="812.2" cy="311.5" r="2.1" fill="#ee9aa2" stroke="#b8303e" stroke-width="1"/><circle cx="680.8" cy="387.7" r="2.6" fill="#e4eef6" opacity="0.55"/><circle cx="680.8" cy="387.7" r="1.25" fill="#1f4d6c"/><circle cx="700.4" cy="386.5" r="2.6" fill="#e4eef6" opacity="0.55"/><circle cx="700.4" cy="386.5" r="1.25" fill="#1f4d6c"/><circle cx="719.9" cy="384.7" r="2.6" fill="#e4eef6" opacity="0.55"/><circle cx="719.9" cy="384.7" r="1.25" fill="#1f4d6c"/><circle cx="756.7" cy="384.2" r="2.6" fill="#e4eef6" opacity="0.55"/><circle cx="756.7" cy="384.2" r="1.25" fill="#1f4d6c"/><circle cx="779.1" cy="386.5" r="2.6" fill="#e4eef6" opacity="0.55"/><circle cx="779.1" cy="386.5" r="1.25" fill="#1f4d6c"/><circle cx="798.6" cy="387.7" r="2.6" fill="#e4eef6" opacity="0.55"/><circle cx="798.6" cy="387.7" r="1.25" fill="#1f4d6c"/><circle cx="699.4" cy="409.4" r="2.6" fill="#e4eef6" opacity="0.55"/><circle cx="699.4" cy="409.4" r="1.25" fill="#1f4d6c"/><circle cx="779.8" cy="409.4" r="2.6" fill="#e4eef6" opacity="0.55"/><circle cx="779.8" cy="409.4" r="1.25" fill="#1f4d6c"/><circle cx="679.9" cy="421.0" r="2.6" fill="#e4eef6" opacity="0.55"/><circle cx="679.9" cy="421.0" r="1.25" fill="#1f4d6c"/><circle cx="799.6" cy="421.0" r="2.6" fill="#e4eef6" opacity="0.55"/><circle cx="799.6" cy="421.0" r="1.25" fill="#1f4d6c"/><circle cx="696.9" cy="453.9" r="2.6" fill="#e4eef6" opacity="0.55"/><circle cx="696.9" cy="453.9" r="1.25" fill="#1f4d6c"/><circle cx="781.9" cy="453.9" r="2.6" fill="#e4eef6" opacity="0.55"/><circle cx="781.9" cy="453.9" r="1.25" fill="#1f4d6c"/><circle cx="679.9" cy="461.5" r="2.6" fill="#e4eef6" opacity="0.55"/><circle cx="679.9" cy="461.5" r="1.25" fill="#1f4d6c"/><circle cx="799.6" cy="461.5" r="2.6" fill="#e4eef6" opacity="0.55"/><circle cx="799.6" cy="461.5" r="1.25" fill="#1f4d6c"/><circle cx="647.5" cy="482.7" r="2.6" fill="#e4eef6" opacity="0.55"/><circle cx="647.5" cy="482.7" r="1.25" fill="#1f4d6c"/><circle cx="831.5" cy="482.7" r="2.6" fill="#e4eef6" opacity="0.55"/><circle cx="831.5" cy="482.7" r="1.25" fill="#1f4d6c"/><circle cx="694.3" cy="497.9" r="2.6" fill="#e4eef6" opacity="0.55"/><circle cx="694.3" cy="497.9" r="1.25" fill="#1f4d6c"/><circle cx="785.1" cy="497.9" r="2.6" fill="#e4eef6" opacity="0.55"/><circle cx="785.1" cy="497.9" r="1.25" fill="#1f4d6c"/><circle cx="647.5" cy="503.7" r="2.6" fill="#e4eef6" opacity="0.55"/><circle cx="647.5" cy="503.7" r="1.25" fill="#1f4d6c"/><circle cx="831.5" cy="503.7" r="2.6" fill="#e4eef6" opacity="0.55"/><circle cx="831.5" cy="503.7" r="1.25" fill="#1f4d6c"/><circle cx="662.9" cy="519.8" r="2.6" fill="#e4eef6" opacity="0.55"/><circle cx="662.9" cy="519.8" r="1.25" fill="#1f4d6c"/><circle cx="680.6" cy="519.1" r="2.6" fill="#e4eef6" opacity="0.55"/><circle cx="680.6" cy="519.1" r="1.25" fill="#1f4d6c"/><circle cx="693.4" cy="519.8" r="2.6" fill="#e4eef6" opacity="0.55"/><circle cx="693.4" cy="519.8" r="1.25" fill="#1f4d6c"/><circle cx="786.1" cy="519.8" r="2.6" fill="#e4eef6" opacity="0.55"/><circle cx="786.1" cy="519.8" r="1.25" fill="#1f4d6c"/><circle cx="798.4" cy="519.1" r="2.6" fill="#e4eef6" opacity="0.55"/><circle cx="798.4" cy="519.1" r="1.25" fill="#1f4d6c"/><circle cx="816.3" cy="519.8" r="2.6" fill="#e4eef6" opacity="0.55"/><circle cx="816.3" cy="519.8" r="1.25" fill="#1f4d6c"/><circle cx="667.1" cy="486.0" r="2.1" fill="#e8ccd4" stroke="#b8365a" stroke-width="1"/><circle cx="685.5" cy="486.0" r="2.1" fill="#e8ccd4" stroke="#b8365a" stroke-width="1"/><circle cx="685.5" cy="501.8" r="2.1" fill="#e8ccd4" stroke="#b8365a" stroke-width="1"/><circle cx="793.8" cy="486.0" r="2.1" fill="#e8ccd4" stroke="#b8365a" stroke-width="1"/><circle cx="812.2" cy="486.0" r="2.1" fill="#e8ccd4" stroke="#b8365a" stroke-width="1"/><circle cx="793.8" cy="501.8" r="2.1" fill="#e8ccd4" stroke="#b8365a" stroke-width="1"/><circle cx="812.2" cy="501.8" r="2.1" fill="#e8ccd4" stroke="#b8365a" stroke-width="1"/><circle cx="667.1" cy="501.8" r="2.1" fill="#7a3cc0" stroke="#5a2ab0" stroke-width="0.9"/><path d="M834.6 290.3 L836.4 288.5 L838.2 290.3 L836.4 292.1 Z" fill="#e86a6a"/><rect x="845.5" y="532.6" width="49" height="39" fill="url(#lr)" stroke="#000" stroke-width="1"/><rect x="845.5" y="571.6" width="49" height="39" fill="url(#lb)" stroke="#000" stroke-width="1"/></svg>
<span style="left:838.8px;top:282.3px;font-size:7px;line-height:9px;letter-spacing:0px;color:#e26464;white-space:pre;">3.4 %</span>
<span style="left:648.0px;top:502.1px;font-size:7px;line-height:9px;letter-spacing:0px;color:#5448e0;white-space:pre;">9.9 %</span>
<span style="left:749.3px;top:542.1px;font-size:13px;line-height:17px;letter-spacing:0.323px;color:#1c1c1c;white-space:pre;">Compressione</span>
<span style="left:784.6px;top:581.1px;font-size:13px;line-height:17px;letter-spacing:0.288px;color:#1c1c1c;white-space:pre;">Trazione</span>
<div style="left:936px;top:151px;width:438px;height:18.6px;background:#d8d8d8;"></div>
<span style="left:938.3px;top:151.8px;font-size:11px;line-height:14px;letter-spacing:-0.048px;color:#000;white-space:pre;">Proprietà</span>
<svg style="left:1343.8px;top:154.9px;" width="8" height="10" viewBox="0 0 8 10"><path d="M1.6 0.6 H6.1 M1.6 0.1 V5.7 M5.6 0.1 V5.7 M0 5.7 H7.2 M3.6 6.2 V9.2" fill="none" stroke="#0a0a0a" stroke-width="1.1"/><rect x="4.4" y="0.6" width="1.2" height="5" fill="#0a0a0a"/></svg>
<svg style="left:1359.9px;top:155px;" width="9" height="9" viewBox="0 0 9 9"><path d="M0.8 0.8 L7.4 7.4 M7.4 0.8 L0.8 7.4" stroke="#0a0a0a" stroke-width="2.1"/></svg>
<div style="left:936.8px;top:169.6px;width:437px;height:19.6px;background:#ffffff;border-bottom:1px solid #c0c0c0;"></div>
<span style="left:940.4px;top:172.8px;font-size:11px;line-height:14px;letter-spacing:-0.311px;color:#000;white-space:pre;">Preferenze vista</span>
<svg style="left:1360px;top:177px;" width="10" height="6" viewBox="0 0 10 6"><path d="M0.8 0.8 L5 5 L9.2 0.8" fill="none" stroke="#444" stroke-width="1"/></svg>
<div style="left:936px;top:189.6px;width:438px;height:392px;background:#dcdcdc;"></div>
<div style="left:936px;top:190.8px;width:438px;height:309.7px;background:#ffffff;border:1px solid #8c8c8c;"></div>
<div style="left:937px;top:191.5px;width:21.5px;height:289.5px;background:#c9c9c9;"></div>
<div style="left:958.5px;top:191.5px;width:169.5px;height:16.5px;background:#c9c9c9;"></div>
<div style="left:958.5px;top:208.0px;width:414.5px;height:1px;background:#d4d4d4;"></div>
<span style="left:961.3px;top:194.1px;font-size:11px;line-height:14px;letter-spacing:0.128px;color:#000;white-space:pre;">Tipo</span>
<span style="left:1132.2px;top:192.9px;font-size:12px;line-height:16px;letter-spacing:0.147px;color:#000;white-space:pre;font-weight:bold;">M-N</span>
<div style="left:958.5px;top:224.0px;width:414.5px;height:1px;background:#d4d4d4;"></div>
<span style="left:961.3px;top:210.1px;font-size:11px;line-height:14px;letter-spacing:0.007px;color:#000;white-space:pre;">Combinazione</span>
<span style="left:1132.2px;top:208.9px;font-size:12px;line-height:16px;letter-spacing:-0.002px;color:#000;white-space:pre;font-weight:bold;">SLU 1</span>
<div style="left:958.5px;top:240.0px;width:414.5px;height:1px;background:#d4d4d4;"></div>
<span style="left:961.3px;top:226.1px;font-size:11px;line-height:14px;letter-spacing:0.105px;color:#000;white-space:pre;">MEd,x</span>
<span style="left:1132.2px;top:224.9px;font-size:12px;line-height:16px;letter-spacing:0.322px;color:#000;white-space:pre;font-weight:bold;">-7800</span>
<div style="left:958.5px;top:256.0px;width:414.5px;height:1px;background:#d4d4d4;"></div>
<span style="left:961.3px;top:242.1px;font-size:11px;line-height:14px;letter-spacing:0.105px;color:#000;white-space:pre;">MEd,y</span>
<span style="left:1132.2px;top:240.9px;font-size:12px;line-height:16px;letter-spacing:0.271px;color:#000;white-space:pre;font-weight:bold;">-400</span>
<div style="left:958.5px;top:272.0px;width:414.5px;height:1px;background:#d4d4d4;"></div>
<span style="left:961.3px;top:258.1px;font-size:11px;line-height:14px;letter-spacing:-0.299px;color:#000;white-space:pre;">NEd</span>
<span style="left:1132.2px;top:256.9px;font-size:12px;line-height:16px;letter-spacing:0.526px;color:#000;white-space:pre;font-weight:bold;">0</span>
<div style="left:958.5px;top:288.0px;width:414.5px;height:1px;background:#d4d4d4;"></div>
<span style="left:961.3px;top:274.1px;font-size:11px;line-height:14px;letter-spacing:0.095px;color:#6a6a6a;white-space:pre;">Mx,Ed verifica</span>
<span style="left:1132.2px;top:272.9px;font-size:12px;line-height:16px;letter-spacing:0.322px;color:#555;white-space:pre;font-weight:bold;">-7800</span>
<div style="left:958.5px;top:304.0px;width:414.5px;height:1px;background:#d4d4d4;"></div>
<span style="left:961.3px;top:290.1px;font-size:11px;line-height:14px;letter-spacing:0.153px;color:#6a6a6a;white-space:pre;">My,Ed verifica</span>
<span style="left:1132.2px;top:288.9px;font-size:12px;line-height:16px;letter-spacing:0.271px;color:#555;white-space:pre;font-weight:bold;">-400</span>
<div style="left:958.5px;top:320.0px;width:414.5px;height:1px;background:#d4d4d4;"></div>
<span style="left:961.3px;top:306.1px;font-size:11px;line-height:14px;letter-spacing:0.049px;color:#6a6a6a;white-space:pre;">MEd verifica</span>
<span style="left:1132.2px;top:304.9px;font-size:12px;line-height:16px;letter-spacing:0.403px;color:#555;white-space:pre;font-weight:bold;">7810.25</span>
<div style="left:958.5px;top:336.0px;width:414.5px;height:1px;background:#d4d4d4;"></div>
<span style="left:961.3px;top:322.1px;font-size:11px;line-height:14px;letter-spacing:-0.299px;color:#6a6a6a;white-space:pre;">NEd</span>
<span style="left:1132.2px;top:320.9px;font-size:12px;line-height:16px;letter-spacing:0.526px;color:#555;white-space:pre;font-weight:bold;">0</span>
<div style="left:958.5px;top:352.0px;width:414.5px;height:1px;background:#d4d4d4;"></div>
<span style="left:961.3px;top:338.1px;font-size:11px;line-height:14px;letter-spacing:-0.006px;color:#6a6a6a;white-space:pre;">MxRd</span>
<span style="left:1132.2px;top:336.9px;font-size:12px;line-height:16px;letter-spacing:0.339px;color:#555;white-space:pre;font-weight:bold;">-76294.26</span>
<div style="left:958.5px;top:368.0px;width:414.5px;height:1px;background:#d4d4d4;"></div>
<span style="left:961.3px;top:354.1px;font-size:11px;line-height:14px;letter-spacing:-0.006px;color:#6a6a6a;white-space:pre;">MyRd</span>
<span style="left:1132.2px;top:352.9px;font-size:12px;line-height:16px;letter-spacing:0.391px;color:#555;white-space:pre;font-weight:bold;">-3912.53</span>
<div style="left:958.5px;top:384.0px;width:414.5px;height:1px;background:#d4d4d4;"></div>
<span style="left:961.3px;top:370.1px;font-size:11px;line-height:14px;letter-spacing:-0.375px;color:#6a6a6a;white-space:pre;">MRd</span>
<span style="left:1132.2px;top:368.9px;font-size:12px;line-height:16px;letter-spacing:0.394px;color:#555;white-space:pre;font-weight:bold;">76394.52</span>
<div style="left:958.5px;top:400.0px;width:414.5px;height:1px;background:#d4d4d4;"></div>
<span style="left:961.3px;top:386.1px;font-size:11px;line-height:14px;letter-spacing:-0.168px;color:#6a6a6a;white-space:pre;">NRd</span>
<span style="left:1132.2px;top:384.9px;font-size:12px;line-height:16px;letter-spacing:0.526px;color:#555;white-space:pre;font-weight:bold;">0</span>
<div style="left:958.5px;top:416.0px;width:414.5px;height:1px;background:#d4d4d4;"></div>
<span style="left:961.3px;top:402.1px;font-size:11px;line-height:14px;letter-spacing:0.289px;color:#6a6a6a;white-space:pre;">ε0</span>
<span style="left:1132.2px;top:400.9px;font-size:12px;line-height:16px;letter-spacing:0.375px;color:#555;white-space:pre;font-weight:bold;">0.0059593</span>
<div style="left:958.5px;top:432.0px;width:414.5px;height:1px;background:#d4d4d4;"></div>
<span style="left:961.3px;top:418.1px;font-size:11px;line-height:14px;letter-spacing:0.300px;color:#6a6a6a;white-space:pre;">xx</span>
<span style="left:1132.2px;top:416.9px;font-size:12px;line-height:16px;letter-spacing:0.355px;color:#555;white-space:pre;font-weight:bold;">-0.00010767</span>
<div style="left:958.5px;top:448.0px;width:414.5px;height:1px;background:#d4d4d4;"></div>
<span style="left:961.3px;top:434.1px;font-size:11px;line-height:14px;letter-spacing:-0.050px;color:#6a6a6a;white-space:pre;">xy</span>
<span style="left:1132.2px;top:432.9px;font-size:12px;line-height:16px;letter-spacing:0.426px;color:#555;white-space:pre;font-weight:bold;">0.00001125</span>
<div style="left:958.5px;top:464.0px;width:414.5px;height:1px;background:#d4d4d4;"></div>
<span style="left:961.3px;top:450.1px;font-size:11px;line-height:14px;letter-spacing:0.224px;color:#6a6a6a;white-space:pre;">c.sic.</span>
<span style="left:1132.2px;top:448.9px;font-size:12px;line-height:16px;letter-spacing:0.383px;color:#555;white-space:pre;font-weight:bold;">9.7813</span>
<div style="left:958.5px;top:480.0px;width:414.5px;height:1px;background:#d4d4d4;"></div>
<span style="left:961.3px;top:466.1px;font-size:11px;line-height:14px;letter-spacing:0.153px;color:#6a6a6a;white-space:pre;">Verifica</span>
<span style="left:1132.2px;top:464.9px;font-size:12px;line-height:16px;letter-spacing:-0.140px;color:#555;white-space:pre;font-weight:bold;">Soddisfatta</span>
<div style="left:1128px;top:191.5px;width:1px;height:289.5px;background:#d4d4d4;"></div>
<div style="left:936px;top:509.5px;width:438px;height:72px;background:#d9d9d9;border:1px solid #8a8a8a;"></div>
<span style="left:941.4px;top:511.2px;font-size:11px;line-height:14px;letter-spacing:0.147px;color:#000;white-space:pre;font-weight:bold;">Tipo</span>
<span style="left:941.4px;top:523.6px;font-size:11px;line-height:14px;letter-spacing:-0.210px;color:#000;white-space:pre;">Tipo di verifica rappresentata.</span>
<div style="left:936px;top:590.5px;width:438px;height:16.5px;background:#d8d8d8;"></div>
<span style="left:938.7px;top:591.2px;font-size:11px;line-height:14px;letter-spacing:-0.103px;color:#000;white-space:pre;">Layer</span>
<svg style="left:1343.8px;top:593.6px;" width="8" height="10" viewBox="0 0 8 10"><path d="M1.6 0.6 H6.1 M1.6 0.1 V5.7 M5.6 0.1 V5.7 M0 5.7 H7.2 M3.6 6.2 V9.2" fill="none" stroke="#0a0a0a" stroke-width="1.1"/><rect x="4.4" y="0.6" width="1.2" height="5" fill="#0a0a0a"/></svg>
<svg style="left:1359.9px;top:593.8px;" width="9" height="9" viewBox="0 0 9 9"><path d="M0.8 0.8 L7.4 7.4 M7.4 0.8 L0.8 7.4" stroke="#0a0a0a" stroke-width="2.1"/></svg>
<div style="left:936px;top:608.5px;width:438px;height:137px;background:#ffffff;border:1px solid #7f7f7f;"></div>
<svg style="left:0px;top:0px;" width="1374" height="784" viewBox="0 0 1374 784"><line x1="948.5" y1="618" x2="948.5" y2="714" stroke="#8a8a8a" stroke-width="1" stroke-dasharray="1 1"/><line x1="948.5" y1="618.5" x2="956" y2="618.5" stroke="#8a8a8a" stroke-width="1" stroke-dasharray="1 1"/><line x1="948.5" y1="634.5" x2="956" y2="634.5" stroke="#8a8a8a" stroke-width="1" stroke-dasharray="1 1"/><line x1="948.5" y1="650.5" x2="956" y2="650.5" stroke="#8a8a8a" stroke-width="1" stroke-dasharray="1 1"/><line x1="948.5" y1="682.5" x2="956" y2="682.5" stroke="#8a8a8a" stroke-width="1" stroke-dasharray="1 1"/><line x1="948.5" y1="714.5" x2="956" y2="714.5" stroke="#8a8a8a" stroke-width="1" stroke-dasharray="1 1"/><line x1="963.5" y1="657" x2="963.5" y2="666" stroke="#8a8a8a" stroke-width="1" stroke-dasharray="1 1"/><line x1="963.5" y1="666.5" x2="971" y2="666.5" stroke="#8a8a8a" stroke-width="1" stroke-dasharray="1 1"/><line x1="963.5" y1="689" x2="963.5" y2="698" stroke="#8a8a8a" stroke-width="1" stroke-dasharray="1 1"/><line x1="963.5" y1="698.5" x2="971" y2="698.5" stroke="#8a8a8a" stroke-width="1" stroke-dasharray="1 1"/><rect x="944.5" y="646.5" width="8" height="8" fill="#fff" stroke="#8c96a0" stroke-width="1"/><line x1="946.5" y1="650.5" x2="950.5" y2="650.5" stroke="#2a4a8a" stroke-width="1"/><rect x="944.5" y="678.5" width="8" height="8" fill="#fff" stroke="#8c96a0" stroke-width="1"/><line x1="946.5" y1="682.5" x2="950.5" y2="682.5" stroke="#2a4a8a" stroke-width="1"/><rect x="956.4" y="611.8" width="12.4" height="12.4" rx="2" fill="#1266c4"/><path d="M959.4 618.2 L961.6 620.5 L966.0 615.6" fill="none" stroke="#fff" stroke-width="1.2"/><rect x="956.4" y="627.8" width="12.4" height="12.4" rx="2" fill="#1266c4"/><path d="M959.4 634.2 L961.6 636.5 L966.0 631.6" fill="none" stroke="#fff" stroke-width="1.2"/><rect x="956.4" y="643.8" width="12.4" height="12.4" rx="2" fill="#1266c4"/><path d="M959.4 650.2 L961.6 652.5 L966.0 647.6" fill="none" stroke="#fff" stroke-width="1.2"/><rect x="971.4" y="659.8" width="12.4" height="12.4" rx="2" fill="#1266c4"/><path d="M974.4 666.2 L976.6 668.5 L981.0 663.6" fill="none" stroke="#fff" stroke-width="1.2"/><rect x="956.4" y="675.8" width="12.4" height="12.4" rx="2" fill="#1266c4"/><path d="M959.4 682.2 L961.6 684.5 L966.0 679.6" fill="none" stroke="#fff" stroke-width="1.2"/><rect x="971.4" y="691.8" width="12.4" height="12.4" rx="2" fill="#1266c4"/><path d="M974.4 698.2 L976.6 700.5 L981.0 695.6" fill="none" stroke="#fff" stroke-width="1.2"/><rect x="956.9" y="708.3" width="11.4" height="11.4" rx="2" fill="#fff" stroke="#444" stroke-width="1"/></svg>
<span style="left:971.4px;top:611.4px;font-size:11px;line-height:14px;letter-spacing:-0.343px;color:#000;white-space:pre;">Dominio e deformazioni</span>
<span style="left:970.6px;top:627.4px;font-size:11px;line-height:14px;letter-spacing:-0.484px;color:#000;white-space:pre;">Griglia</span>
<span style="left:971.4px;top:643.4px;font-size:11px;line-height:14px;letter-spacing:-0.439px;color:#000;white-space:pre;">Sezioni</span>
<span style="left:986.4px;top:659.4px;font-size:11px;line-height:14px;letter-spacing:-0.436px;color:#000;white-space:pre;">Riempimento</span>
<span style="left:971.4px;top:675.4px;font-size:11px;line-height:14px;letter-spacing:-0.555px;color:#000;white-space:pre;">Armature</span>
<span style="left:986.4px;top:691.4px;font-size:11px;line-height:14px;letter-spacing:-0.580px;color:#000;white-space:pre;">Barre</span>
<span style="left:971.4px;top:707.4px;font-size:11px;line-height:14px;letter-spacing:-0.381px;color:#000;white-space:pre;">Assi e origine</span>
<div style="left:9px;top:651px;width:1.5px;height:22px;background:#5a5a5a;"></div>
<div style="left:10.5px;top:651.5px;width:916px;height:1px;background:#e4e4e4;"></div>
<div style="left:70.5px;top:652.5px;width:52px;height:21px;background:#fafafa;border-left:1px solid #e6e6e6;border-right:1px solid #e6e6e6;"></div>
<div style="left:11px;top:654px;width:59.5px;height:19px;background:#f3f3f3;border-right:1px solid #e8e8e8;"></div>
<div style="left:122.5px;top:654px;width:55px;height:19px;background:#f3f3f3;border-right:1px solid #e8e8e8;"></div>
<span style="left:17.5px;top:654.7px;font-size:11px;line-height:14px;letter-spacing:-0.439px;color:#000;white-space:pre;">Geometria</span>
<span style="left:78.3px;top:656.4px;font-size:11px;line-height:14px;letter-spacing:-0.347px;color:#000;white-space:pre;">Risultati</span>
<span style="left:127.4px;top:654.7px;font-size:11px;line-height:14px;letter-spacing:-0.324px;color:#000;white-space:pre;">Relazione</span>
<div style="left:8px;top:680px;width:459px;height:18px;background:#d9d9d9;"></div>
<div style="left:8px;top:698px;width:459px;height:47px;background:#ffffff;"></div>
<div style="left:450px;top:698px;width:15px;height:47px;background:#f0f0f0;"></div>
<div style="left:465px;top:698px;width:2px;height:47px;background:#fbfbfb;"></div>
<span style="left:10.5px;top:700.8px;font-size:11px;line-height:14px;letter-spacing:-0.221px;color:#000;white-space:pre;">Comando: ASSI E ORIGINE</span>
<span style="left:10.5px;top:726.7px;font-size:11px;line-height:14px;letter-spacing:-0.381px;color:#000;white-space:pre;">Comando:</span>
<div style="left:8px;top:744.5px;width:459px;height:1px;background:#7a7a7a;"></div>
<div style="left:472px;top:680px;width:459px;height:17.5px;background:#d9d9d9;"></div>
<span style="left:474.6px;top:681.0px;font-size:11px;line-height:14px;letter-spacing:-0.159px;color:#000;white-space:pre;">Note</span>
<svg style="left:900px;top:683px;" width="8" height="10" viewBox="0 0 8 10"><path d="M1.6 0.6 H6.1 M1.6 0.1 V5.7 M5.6 0.1 V5.7 M0 5.7 H7.2 M3.6 6.2 V9.2" fill="none" stroke="#0a0a0a" stroke-width="1.1"/><rect x="4.4" y="0.6" width="1.2" height="5" fill="#0a0a0a"/></svg>
<svg style="left:916.5px;top:683.5px;" width="9" height="9" viewBox="0 0 9 9"><path d="M0.8 0.8 L7.4 7.4 M7.4 0.8 L0.8 7.4" stroke="#0a0a0a" stroke-width="2.1"/></svg>
<div style="left:472px;top:697.5px;width:459px;height:24px;background:#f0f0f0;"></div>
<svg style="left:477px;top:703.5px;" width="15" height="14" viewBox="0 0 15 14"><path d="M1 1 H14 L9 7 V12.6 H6 V7 Z" fill="#ffd83a" stroke="#d8402a" stroke-width="1.3" stroke-linejoin="round"/></svg>
<span style="left:500.0px;top:702.0px;font-size:12px;line-height:16px;letter-spacing:0.172px;color:#000;white-space:pre;">Tipologia 0/0</span>
<div style="left:472px;top:721.5px;width:459px;height:23.5px;background:#ffffff;"></div>
<div style="left:467px;top:745px;width:467px;height:1px;background:#9a9a9a;"></div>
<div style="left:8px;top:746px;width:1366px;height:21px;background:#d9d9d9;"></div>
<div style="left:8px;top:745px;width:1366px;height:1.2px;background:#8a8a8a;"></div>
<div style="left:975px;top:747px;width:121px;height:19.5px;background:#dcdcdc;border:1px solid #b8b8b8;border-right-color:#f0f0f0;border-bottom-color:#f0f0f0;"></div>
<span style="left:978.9px;top:749.3px;font-size:11px;line-height:14px;letter-spacing:-0.141px;color:#000;white-space:pre;">1407; -721; 0</span>
<div style="left:1271.9px;top:747px;width:99.4px;height:19.5px;background:#dcdcdc;border:1px solid #b8b8b8;border-right-color:#f0f0f0;border-bottom-color:#f0f0f0;"></div>
<span style="left:1275.5px;top:749.3px;font-size:11px;line-height:14px;letter-spacing:-0.059px;color:#000;white-space:pre;">cm,kN,deg,°C,s</span>
<div style="left:1097.2px;top:747px;width:23.8px;height:19.5px;background:#d8d8d8;border:1px solid #e9e9e9;border-right-color:#bdbdbd;border-bottom-color:#bdbdbd;"></div>
<div style="left:1123px;top:747px;width:22.8px;height:19.5px;background:#d8d8d8;border:1px solid #e9e9e9;border-right-color:#bdbdbd;border-bottom-color:#bdbdbd;"></div>
<div style="left:1147.5px;top:747px;width:22.1px;height:19.5px;background:#e0e0e0;border:1px solid #7e7e7e;border-right-color:#f4f4f4;border-bottom-color:#f4f4f4;box-shadow:inset 1px 1px 0 #a8a8a8;"></div>
<div style="left:1171.6px;top:747px;width:23.8px;height:19.5px;background:#d8d8d8;border:1px solid #e9e9e9;border-right-color:#bdbdbd;border-bottom-color:#bdbdbd;"></div>
<div style="left:1197px;top:747px;width:23.2px;height:19.5px;background:#e0e0e0;border:1px solid #7e7e7e;border-right-color:#f4f4f4;border-bottom-color:#f4f4f4;box-shadow:inset 1px 1px 0 #a8a8a8;"></div>
<div style="left:1222.3px;top:747px;width:23.7px;height:19.5px;background:#d8d8d8;border:1px solid #e9e9e9;border-right-color:#bdbdbd;border-bottom-color:#bdbdbd;"></div>
<div style="left:1247.5px;top:747px;width:22.3px;height:19.5px;background:#e0e0e0;border:1px solid #7e7e7e;border-right-color:#f4f4f4;border-bottom-color:#f4f4f4;box-shadow:inset 1px 1px 0 #a8a8a8;"></div>
<svg style="left:1102px;top:749px;" width="14.4" height="14" viewBox="0 0 14.4 14"><path d="M7.2 0.6 L13.8 4.2 L7.2 7.8 L0.6 4.2 Z" fill="#dc1420"/><path d="M0.8 7 L7.2 10.4 L13.6 7 M0.8 9.8 L7.2 13.2 L13.6 9.8" fill="none" stroke="#dc1420" stroke-width="1.7"/></svg>
<svg style="left:1128px;top:748.2px;" width="12" height="16" viewBox="0 0 12 16"><path d="M6 0.4 A5.6 5.6 0 0 1 9 10.6 V12 H3 V10.6 A5.6 5.6 0 0 1 6 0.4 Z" fill="#b6b6b6"/><rect x="3.4" y="12.5" width="5.2" height="2.8" rx="1" fill="#a6a6a6"/></svg>
<svg style="left:1151.6px;top:749.6px;" width="16" height="15" viewBox="0 0 16 15"><rect x="1.4" y="1.4" width="10.6" height="10.8" fill="none" stroke="#222" stroke-width="1.7" stroke-dasharray="3 2" stroke-dashoffset="1"/><rect x="0.3" y="0.3" width="2.4" height="2.4" fill="#222"/><rect x="10.8" y="0.3" width="2.4" height="2.4" fill="#222"/><rect x="0.3" y="11" width="2.4" height="2.4" fill="#222"/><circle cx="11.6" cy="10.8" r="3.5" fill="#3fae3a"/><path d="M11.6 8.8 V12.8 M9.6 10.8 H13.6" stroke="#fff" stroke-width="1.1"/></svg>
<svg style="left:1176.5px;top:749.4px;" width="15" height="14" viewBox="0 0 15 14"><path d="M1.4 0 V12.6 H14.6" fill="none" stroke="#555" stroke-width="1.2"/><path d="M1.4 9 H4.6 V12.6" fill="none" stroke="#777" stroke-width="0.8"/></svg>
<svg style="left:1200.6px;top:749px;" width="17" height="16" viewBox="0 0 17 16"><path d="M3.6 2.8 H15 V14.2 H3.6 Z" fill="none" stroke="#1c1c1c" stroke-width="1.3"/><rect x="1" y="0.8" width="4" height="4" fill="#fff" stroke="#d0222a" stroke-width="1.2"/></svg>
<svg style="left:1226.4px;top:748.4px;" width="16" height="16" viewBox="0 0 16 16"><path d="M2.6 0 V15.6 M6.2 0 V15.6 M9.8 0 V15.6 M13.4 0 V15.6 M0 2.6 H15.8 M0 6.2 H15.8 M0 9.8 H15.8 M0 13.4 H15.8" stroke="#7c7c7c" stroke-width="0.9"/></svg>
<svg style="left:1252.6px;top:749.8px;" width="13" height="14" viewBox="0 0 13 14"><path d="M1.8 0.8 H11 Q12 0.8 12 1.8 V9 Q12 10 11 10 H8.4 L6.4 12.8 L5.6 10 H1.8 Q0.8 10 0.8 9 V1.8 Q0.8 0.8 1.8 0.8 Z" fill="#fff" stroke="#1c1c1c" stroke-width="1.4" stroke-linejoin="round"/></svg>
</div></body></html>
